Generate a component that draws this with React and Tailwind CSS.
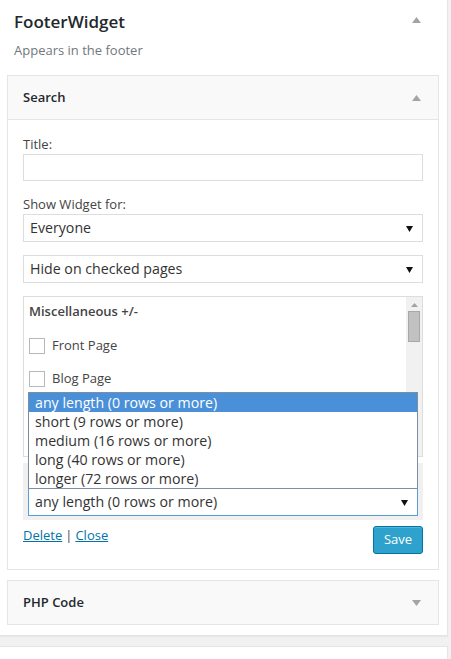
import React from "react";

function TriUp({ className = "" }) {
  return (
    <svg width="9" height="6" viewBox="0 0 9 6" className={className}>
      <path d="M0 6 L4.5 0 L9 6 Z" fill="#a0a5aa" />
    </svg>
  );
}
function TriDown({ className = "" }) {
  return (
    <svg width="9" height="6" viewBox="0 0 9 6" className={className}>
      <path d="M0 0 L9 0 L4.5 6 Z" fill="#a0a5aa" />
    </svg>
  );
}
function SelArrow() {
  return (
    <svg width="7" height="7" viewBox="0 0 7 7">
      <path d="M0 1 L7 1 L3.5 7 Z" fill="#111" />
    </svg>
  );
}

function Select({ text, focus = false }) {
  return (
    <div
      className={
        "h-[28px] flex items-center justify-between pl-[6px] pr-[9px] bg-white text-[14.2px] text-[#333] border " +
        (focus ? "border-[#5b9dd9]" : "border-[#ddd]")
      }
    >
      <span>{text}</span>
      <SelArrow />
    </div>
  );
}

function Check({ label }) {
  return (
    <div className="flex items-center h-[16px] pl-[5px]">
      <div className="w-[16px] h-[16px] border border-[#b4b9be] bg-white" />
      <span className="ml-[7px] text-[13px] text-[#444]">{label}</span>
    </div>
  );
}

export default function App() {
  const options = [
    "any length (0 rows or more)",
    "short (9 rows or more)",
    "medium (16 rows or more)",
    "long (40 rows or more)",
    "longer (72 rows or more)",
  ];
  return (
    <div
      className="w-[451px] h-[659px] overflow-hidden bg-[#f1f1f1]"
      style={{ fontFamily: '"Open Sans", "Noto Sans", sans-serif' }}
    >
      <div className="w-[448px] bg-white border-r border-b border-[#e5e5e5] shadow-[0_1px_1px_rgba(0,0,0,0.04)] pb-[10px]">
        <div className="flex items-center justify-between pl-[14px] pr-[26px] pt-[10px] h-[34px]">
          <h2 className="text-[17px] leading-[24px] font-semibold text-[#23282d]">FooterWidget</h2>
          <TriUp className="mb-[4px]" />
        </div>
        <div className="pl-[14px] mt-[6px] text-[13px] leading-[20px] text-[#72777c]">Appears in the footer</div>

        <div className="mx-[7px] mt-[15px] border border-[#e5e5e5] bg-white w-[432px]">
          <div className="h-[44px] bg-[#f9f9f9] border-b border-[#e5e5e5] flex items-center justify-between pl-[15px] pr-[17px]">
            <span className="text-[13px] font-semibold text-[#23282d]">Search</span>
            <TriUp />
          </div>
          <div className="px-[15px] pb-[15px]">
            <div className="pt-[14px] text-[13px] leading-[20px] text-[#444]">Title:</div>
            <div className="h-[27px] border border-[#ddd] bg-white" />
            <div className="mt-[13px] text-[13px] leading-[20px] text-[#444]">Show Widget for:</div>
            <Select text="Everyone" />
            <div className="mt-[13px]">
              <Select text="Hide on checked pages" />
            </div>
            <div className="mt-[13px] h-[161px] border border-[#ddd] bg-white flex overflow-hidden">
              <div className="flex-1 pt-[4px]">
                <div className="pl-[5px] text-[13px] font-semibold text-[#444] leading-[20px]">Miscellaneous +/-</div>
                <div className="mt-[17px]">
                  <Check label="Front Page" />
                </div>
                <div className="mt-[17px]">
                  <Check label="Blog Page" />
                </div>
              </div>
              <div className="w-[16px] bg-[#f1f1f1] flex flex-col items-center">
                <svg width="7" height="4" viewBox="0 0 7 4" className="mt-[6px]">
                  <path d="M0 4 L3.5 0 L7 4 Z" fill="#a3a3a3" />
                </svg>
                <div className="mt-[4px] w-[12px] h-[31px] bg-[#c1c1c1] border border-[#a8a8a8]" />
              </div>
            </div>
            <div className="relative mt-[6px] bg-[#f0f0f0] px-[5px] pt-[25px] pb-[4px]">
              <div className="absolute left-[5px] right-[5px] bottom-[31px] bg-white border border-[#7a8fa6] text-[14.2px] text-[#333]">
                {options.map((o, i) => (
                  <div
                    key={o}
                    className={
                      "h-[19px] leading-[19px] pl-[6px] " + (i === 0 ? "bg-[#4a90d9] text-white" : "")
                    }
                  >
                    {o}
                  </div>
                ))}
              </div>
              <Select text="any length (0 rows or more)" focus />
            </div>
            <div className="mt-[6px] flex justify-between items-start">
              <div className="text-[13px] leading-[18px] text-[#444]">
                <a className="text-[#0073aa] underline">Delete</a>
                <span className="mx-[3px]">|</span>
                <a className="text-[#0073aa] underline">Close</a>
              </div>
              <button className="h-[28px] w-[50px] rounded-[3px] bg-[#2ea2cc] border border-[#0074a2] text-white text-[13px] shadow-[inset_0_1px_0_rgba(120,200,230,0.5)]">
                Save
              </button>
            </div>
          </div>
        </div>

        <div className="mx-[7px] mt-[10px] w-[432px] h-[45px] bg-[#f9f9f9] border border-[#e5e5e5] flex items-center justify-between pl-[15px] pr-[17px]">
          <span className="text-[13px] font-semibold text-[#23282d]">PHP Code</span>
          <TriDown />
        </div>
      </div>
      <div className="mt-[10px] w-[448px] h-[40px] bg-white border border-l-0 border-[#e5e5e5]" />
    </div>
  );
}
